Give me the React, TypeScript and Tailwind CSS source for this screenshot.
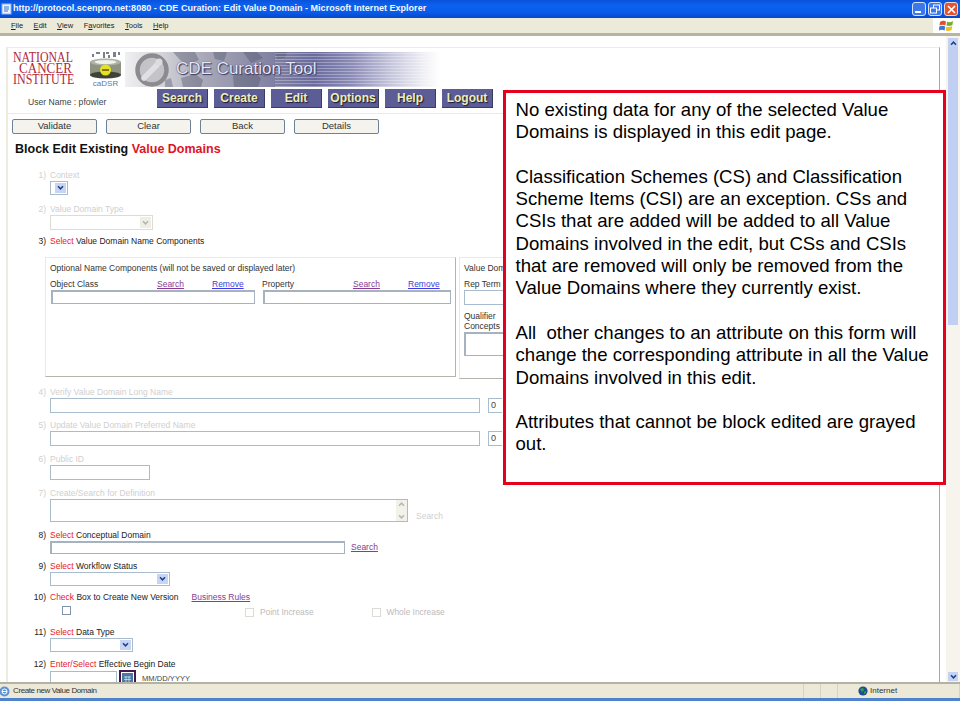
import React from "react";

const sans = "font-['Liberation_Sans',Arial,sans-serif]";

function Chevron({ color = "#1f3f8f" }: { color?: string }) {
  return (
    <svg width="7" height="6" viewBox="0 0 7 6" fill="none">
      <path d="M1 1.2 L3.5 3.8 L6 1.2" stroke={color} strokeWidth="1.5" />
    </svg>
  );
}

function Box({ className = "" }: { className?: string }) {
  return <div className={`border border-[#a9bccd] bg-white ${className}`} />;
}

function Select({ className = "", disabled = false }: { className?: string; disabled?: boolean }) {
  return (
    <div className={`flex justify-end border p-px ${disabled ? "border-[#dcdcd2] bg-white" : "border-[#a9bccd] bg-white"} ${className}`}>
      <div className={`flex w-[11px] items-center justify-center ${disabled ? "bg-[#eeeee6]" : "bg-[#c5d5f2]"}`}>
        <Chevron color={disabled ? "#b4b4ac" : "#1f3f8f"} />
      </div>
    </div>
  );
}

function Label({ n, children, className = "", dim = false }: { n: string; children: React.ReactNode; className?: string; dim?: boolean }) {
  return (
    <div className={`flex h-[11px] items-center text-[8.5px] leading-[11px] ${dim ? "text-[#cfcfcf]" : "text-[#222]"} ${className}`}>
      <span className="w-[38px] text-right">{n}</span>
      <span className="ml-[4px] whitespace-nowrap">{children}</span>
    </div>
  );
}

const Req = ({ children }: { children: React.ReactNode }) => <span className="text-[#e8202c]">{children}</span>;

function NavBtn({ label }: { label: string }) {
  return (
    <div className="flex h-[19px] w-[51px] items-center justify-center border-r border-b border-[#3c3c5c] bg-[#5c5c96] text-[12px] font-bold text-[#eeeeb4] [text-shadow:1px_1px_1px_#1a1a30]">
      {label}
    </div>
  );
}

function ActBtn({ label }: { label: string }) {
  return (
    <div className="flex h-[15px] w-[85px] items-center justify-center rounded-[2px] border border-[#6d8197] bg-[#f4f3ee] text-[9.5px] text-[#333]">
      {label}
    </div>
  );
}

function NciLogo() {
  return (
    <div className="w-[62px] font-['Liberation_Serif',serif] text-[15px] leading-[11px] text-[#b3283c]">
      <div className="origin-left scale-x-[0.79] whitespace-nowrap">NATIONAL</div>
      <div className="ml-[6px] origin-left scale-x-[0.87] whitespace-nowrap">CANCER</div>
      <div className="origin-left scale-x-[0.8] whitespace-nowrap">INSTITUTE</div>
    </div>
  );
}

function CadsrLogo() {
  return (
    <div className="flex w-[33px] flex-col items-center">
      <svg width="33" height="27" viewBox="0 0 33 27">
        <g fill="#7c8088">
          <rect x="3" y="2" width="2" height="3" />
          <rect x="7" y="0" width="4" height="2" />
          <rect x="14" y="0" width="2" height="6" />
          <rect x="17" y="0" width="3" height="2" />
          <rect x="19" y="3" width="2" height="3" />
          <rect x="24" y="0" width="3" height="5" />
          <rect x="29" y="0" width="2" height="3" />
        </g>
        <rect x="1" y="10" width="31" height="13" fill="#8f9482" />
        <ellipse cx="16.5" cy="10" rx="15.5" ry="3.5" fill="#aeb2a6" />
        <ellipse cx="16.5" cy="10" rx="11" ry="2" fill="#eef0ea" />
        <ellipse cx="16.5" cy="23" rx="15.5" ry="3.5" fill="#3e4238" />
        <circle cx="16.5" cy="18" r="5.5" fill="#e6e21e" />
        <path d="M13 18h7" stroke="#5a5a10" strokeWidth="1.5" />
      </svg>
      <div className="mt-[1px] text-[8px] leading-[8px] text-[#66769a]">caDSR</div>
    </div>
  );
}

function Banner() {
  return (
    <div className="relative h-[35px] w-[315px] overflow-hidden bg-[linear-gradient(90deg,#f0f0f2_0%,#d2d2d8_12%,#a8a8b8_25%,#8484a4_45%,#6a6a9e_60%,#8c8cb8_72%,#c8c8de_85%,#f0f0f6_95%,#ffffff_100%)]">
      <svg className="absolute inset-0" width="315" height="35" viewBox="0 0 315 35">
        <g fill="#50546c" opacity="0.4">
          <path d="M48 0h22l4 8-10 4-8-3zM56 26l14-4 8 6-2 7H58zM88 0h14l-3 9-9-2zM118 0h14l6 6-12 5zM108 24l18-5 10 7-3 9h-24zM150 0h12l-2 6-8 1zM74 14l8 2-2 6-7-2zM40 28l6-2 2 9h-8zM136 18l8-3 3 7-8 3z" />
        </g>
        <g stroke="#ffffff" strokeWidth="1" opacity="0.3">
          {Array.from({ length: 12 }).map((_, i) => (
            <line key={i} x1="150" x2="315" y1={1.5 + i * 3} y2={1.5 + i * 3} />
          ))}
        </g>
        <circle cx="27" cy="18" r="14.5" fill="#c4c4c8" stroke="#8c8c90" strokeWidth="4.5" />
        <path d="M19 26 L32 13" stroke="#e0e0e2" strokeWidth="5.5" strokeLinecap="round" />
        <circle cx="34" cy="10" r="3.5" fill="#dcdce0" />
      </svg>
      <div className="absolute top-[6px] left-[51px] text-[17px] leading-[21px] whitespace-nowrap text-[#e6e6f6] [text-shadow:0_0_1px_#2a2a50,1px_1px_1px_#3a3a60]">
        CDE Curation Tool
      </div>
    </div>
  );
}

function TitleBar() {
  return (
    <div className="flex h-[18px] items-center bg-[linear-gradient(180deg,#0a52d8_0%,#0a62f2_30%,#0a5ae8_70%,#0648cc_100%)] pr-[2px]">
      <svg className="ml-[1px]" width="11" height="12" viewBox="0 0 11 12">
        <rect x="1" y="1" width="9" height="10" fill="#eaf2ff" stroke="#8fb4e8" />
        <path d="M3 4h5M3 6h5M3 8h4" stroke="#3a70c0" />
      </svg>
      <div className="ml-[1px] text-[9.05px] font-bold whitespace-nowrap text-[#f2f6ff]">
        http://protocol.scenpro.net:8080 - CDE Curation: Edit Value Domain - Microsoft Internet Explorer
      </div>
      <div className="ml-auto flex items-center gap-[2px]">
        <div className="flex h-[14px] w-[14px] items-end rounded-[3px] border border-[#d8e4fa] bg-[#3c78ea] p-[2px]">
          <div className="h-[2px] w-[6px] bg-white" />
        </div>
        <div className="flex h-[14px] w-[14px] items-center justify-center rounded-[3px] border border-[#d8e4fa] bg-[#3c78ea]">
          <svg width="10" height="10" viewBox="0 0 10 10" fill="none" stroke="#fff">
            <rect x="3.5" y="1" width="6" height="5" />
            <rect x="0.5" y="4" width="6" height="5" fill="#3c78ea" />
          </svg>
        </div>
        <div className="flex h-[14px] w-[14px] items-center justify-center rounded-[3px] border border-[#f2d8d0] bg-[#e2552e]">
          <svg width="9" height="9" viewBox="0 0 9 9" stroke="#fff" strokeWidth="1.7">
            <path d="M1 1 L8 8 M8 1 L1 8" />
          </svg>
        </div>
      </div>
    </div>
  );
}

function MenuBar() {
  return (
    <div className="flex h-[18px] border-b-[3px] border-[#b8b4a2] bg-[#ecead9]">
      <div className="flex flex-1 items-center gap-[10.5px] pl-[11px] text-[7.5px] text-[#222]">
        <span><u>F</u>ile</span>
        <span><u>E</u>dit</span>
        <span><u>V</u>iew</span>
        <span>F<u>a</u>vorites</span>
        <span><u>T</u>ools</span>
        <span><u>H</u>elp</span>
      </div>
      <div className="flex w-[27px] items-center justify-center bg-white">
        <svg width="15" height="14" viewBox="0 0 15 14">
          <path d="M1 3 Q4 1 7 2.5 L6.3 6.5 Q3.5 5 .5 6.5Z" fill="#e0502c" />
          <path d="M8 2.8 Q11 4 14 2 L13.4 6 Q10.5 7.5 7.4 6.6Z" fill="#70b030" />
          <path d="M.3 7.5 Q3.3 6 6.2 7.5 L5.6 11.5 Q2.6 10 0 11.5Z" fill="#3a78d8" />
          <path d="M7.2 7.7 Q10.2 8.6 13.3 7 L12.7 11 Q9.6 12.6 6.6 11.6Z" fill="#f0c020" />
        </svg>
      </div>
    </div>
  );
}

function NameBox() {
  return (
    <div className="h-[120px] w-[411px] border-t border-r border-b border-l border-t-[#ece9e0] border-r-[#b4b4ac] border-b-[#b4b4ac] border-l-[#ece9e0] px-[4px] pt-[5px] text-[8.5px] leading-[11px] text-[#333]">
      <div>Optional Name Components (will not be saved or displayed later)</div>
      <div className="mt-[5px] grid grid-cols-[205px_189px] gap-x-[7px]">
        <div>
          <div className="grid h-[11px] grid-cols-[107px_55px_1fr]">
            <span>Object Class</span>
            <span className="text-[#8a3a94] underline">Search</span>
            <span className="text-[#3a3ae0] underline">Remove</span>
          </div>
          <div className="ml-px h-[14px] border border-t-2 border-l-2 border-[#a6b2bf] bg-white" />
        </div>
        <div>
          <div className="grid h-[11px] grid-cols-[91px_55px_1fr]">
            <span>Property</span>
            <span className="text-[#8a3a94] underline">Search</span>
            <span className="text-[#3a3ae0] underline">Remove</span>
          </div>
          <div className="ml-px h-[14px] border border-t-2 border-l-2 border-[#a6b2bf] bg-white" />
        </div>
      </div>
    </div>
  );
}

function RepBox() {
  return (
    <div className="ml-[3px] h-[122px] w-[47px] overflow-hidden border-t border-b border-l border-t-[#ece9e0] border-b-[#b4b4ac] border-l-[#ece9e0] pt-[5px] pl-[4px] text-[8.5px] leading-[10px] whitespace-nowrap text-[#333]">
      <div>Value Dom</div>
      <div className="mt-[6px]">Rep Term</div>
      <div className="mt-[1px] h-[15px] w-[60px] border border-[#a9bccd]" />
      <div className="mt-[6px]">Qualifier</div>
      <div>Concepts</div>
      <div className="mt-[1px] h-[24px] w-[60px] border border-t-2 border-l-2 border-[#a6b2bf]" />
    </div>
  );
}

function Form() {
  return (
    <div className="mt-[14px]">
      <Label n="1)" dim>Context</Label>
      <div className="ml-[42px] flex">
        <Select className="h-[14px] w-[18px]" />
      </div>

      <Label n="2)" dim className="mt-[9px]">Value Domain Type</Label>
      <div className="ml-[42px]">
        <Select disabled className="h-[15px] w-[103px]" />
      </div>

      <Label n="3)" className="mt-[6px]"><Req>Select</Req> Value Domain Name Components</Label>
      <div className="mt-[10px] ml-[37px] flex">
        <NameBox />
        <RepBox />
      </div>

      <Label n="4)" dim className="mt-[8px]">Verify Value Domain Long Name</Label>
      <div className="ml-[42px] flex items-center">
        <Box className="h-[15px] w-[430px]" />
        <div className="ml-[8px] flex h-[15px] w-[14px] items-center border-y border-l border-[#a9bccd] pl-[2px] text-[9px] text-[#444]">0</div>
      </div>

      <Label n="5)" dim className="mt-[7px]">Update Value Domain Preferred Name</Label>
      <div className="ml-[42px] flex items-center">
        <Box className="h-[15px] w-[430px]" />
        <div className="ml-[8px] flex h-[15px] w-[14px] items-center border-y border-l border-[#a9bccd] pl-[2px] text-[9px] text-[#444]">0</div>
      </div>

      <Label n="6)" dim className="mt-[8px]">Public ID</Label>
      <div className="ml-[42px]">
        <Box className="h-[15px] w-[100px]" />
      </div>

      <Label n="7)" dim className="mt-[8px]">Create/Search for Definition</Label>
      <div className="ml-[42px] flex items-end">
        <div className="flex h-[23px] w-[358px] justify-end border border-[#a9bccd]">
          <div className="flex w-[11px] flex-col items-center justify-between bg-[#f2f1ea] py-[1px]">
            <div className="rotate-180"><Chevron color="#b8b8b0" /></div>
            <Chevron color="#b8b8b0" />
          </div>
        </div>
        <span className="ml-[8px] text-[8.5px] leading-[11px] text-[#cfcfcf]">Search</span>
      </div>

      <Label n="8)" className="mt-[8px]"><Req>Select</Req> Conceptual Domain</Label>
      <div className="ml-[42px] flex items-center">
        <div className="h-[13px] w-[295px] border border-t-2 border-l-2 border-[#a6b2bf]" />
        <span className="ml-[6px] text-[8.5px] text-[#8a3a94] underline">Search</span>
      </div>

      <Label n="9)" className="mt-[7px]"><Req>Select</Req> Workflow Status</Label>
      <div className="ml-[42px]">
        <Select className="h-[14px] w-[120px]" />
      </div>

      <Label n="10)" className="mt-[6px]">
        <Req>Check</Req> Box to Create New Version
        <span className="ml-[13px] text-[#8a3a94] underline">Business Rules</span>
      </Label>
      <div className="flex h-[15px] items-start text-[8.4px] leading-[11px] text-[#bbb]">
        <div className="mt-[3px] ml-[54px] h-[9px] w-[9px] border border-[#7f95ab]" />
        <div className="mt-[5px] ml-[174px] h-[9px] w-[9px] border border-[#dcdcd6]" />
        <span className="mt-[4px] ml-[6px]">Point Increase</span>
        <div className="mt-[5px] ml-[58px] h-[9px] w-[9px] border border-[#dcdcd6]" />
        <span className="mt-[4px] ml-[6px]">Whole Increase</span>
      </div>

      <Label n="11)" className="mt-[9px]"><Req>Select</Req> Data Type</Label>
      <div className="ml-[42px]">
        <Select className="h-[14px] w-[83px]" />
      </div>

      <Label n="12)" className="mt-[7px]"><Req>Enter/Select</Req> Effective Begin Date</Label>
      <div className="ml-[42px] flex items-center">
        <Box className="h-[15px] w-[67px]" />
        <div className="ml-[2px] flex h-[17px] w-[17px] items-center justify-center border-2 border-[#44184c] bg-white">
          <svg width="11" height="11" viewBox="0 0 11 11">
            <rect width="11" height="11" fill="#4a78a4" />
            <path d="M2 4h7M2 6.5h7M4 3v6M7 3v6" stroke="#dfe8f2" strokeWidth="0.7" />
          </svg>
        </div>
        <span className="ml-[6px] text-[7.6px] text-[#444]">MM/DD/YYYY</span>
      </div>
    </div>
  );
}

function Page() {
  return (
    <div className="h-full overflow-hidden border-t border-r border-l-2 border-t-[#f1ecdf] border-r-[#a8a8a0] border-l-[#eeebdf] bg-white">
      <div className="mt-[4px] flex h-[35px] pl-[5px]">
        <NciLogo />
        <div className="ml-[14px]"><CadsrLogo /></div>
        <div className="ml-[3px]"><Banner /></div>
      </div>
      <div className="mt-[2px] flex h-[19px] items-end pl-[20px]">
        <div className="w-[129px] text-[8.6px] leading-[11px] text-[#444]">User Name : pfowler</div>
        <div className="flex gap-[6px]">
          {["Search", "Create", "Edit", "Options", "Help", "Logout"].map((l) => (
            <NavBtn key={l} label={l} />
          ))}
        </div>
      </div>
      <div className="mt-[5px] h-px bg-[#efeadf]" />
      <div className="mt-[5px] flex gap-[9px] pl-[4px]">
        {["Validate", "Clear", "Back", "Details"].map((l) => (
          <ActBtn key={l} label={l} />
        ))}
      </div>
      <div className="mt-[8px] pl-[7px] text-[12.5px] leading-[14px] font-bold text-[#111]">
        Block Edit Existing <span className="text-[#e0141e]">Value Domains</span>
      </div>
      <Form />
    </div>
  );
}

function Scrollbar() {
  return (
    <div className="flex w-[14px] flex-col bg-[#f6f4ec] pt-[2px] pr-[2px] pl-[2px]">
      <div className="flex h-[9px] items-center justify-center bg-[#c4d3f4]">
        <div className="rotate-180"><Chevron /></div>
      </div>
      <div className="h-[278px] bg-[#c0cff2]" />
      <div className="flex-1" />
      <div className="mb-[1px] flex h-[9px] items-center justify-center bg-[#c4d3f4]">
        <Chevron />
      </div>
    </div>
  );
}

function StatusBar() {
  return (
    <div className="flex h-[16px] items-center border-t-2 border-[#b4b2a2] bg-[#ece9d9] text-[8px] text-[#333]">
      <svg width="11" height="11" viewBox="0 0 11 11">
        <circle cx="4.5" cy="5.5" r="5" fill="#5a94d8" />
        <circle cx="4.5" cy="5.5" r="2.5" fill="none" stroke="#fff" />
        <path d="M2 5.5h5" stroke="#fff" />
      </svg>
      <span className="ml-[2px] tracking-[-0.4px]">Create new Value Domain</span>
      <div className="ml-auto flex h-full items-center">
        <div className="h-full w-[17px] border-l border-[#d6d3c2]" />
        <div className="h-full w-[17px] border-l border-[#d6d3c2]" />
        <div className="flex h-full w-[123px] items-center border-x border-[#d6d3c2] pl-[20px]">
          <svg width="10" height="10" viewBox="0 0 10 10">
            <circle cx="5" cy="5" r="4.6" fill="#1d4f8c" />
            <path d="M2 3l3-1 1 2-2 2zM6 6l2-1 0 2-2 1z" fill="#3f9f4a" />
          </svg>
          <span className="ml-[2px]">Internet</span>
        </div>
      </div>
    </div>
  );
}

function Callout() {
  return (
    <div className="absolute top-[90px] left-[503px] z-10 h-[395px] w-[443px] border-[3px] border-[#e6001e] bg-white pt-[6px] pl-[9.5px] text-[18.6px] leading-[22.3px] whitespace-nowrap text-black">
      <div>No existing data for any of the selected Value</div>
      <div>Domains is displayed in this edit page.</div>
      <div className="mt-[22.3px]">Classification Schemes (CS) and Classification</div>
      <div>Scheme Items (CSI) are an exception. CSs and</div>
      <div>CSIs that are added will be added to all Value</div>
      <div>Domains involved in the edit, but CSs and CSIs</div>
      <div>that are removed will only be removed from the</div>
      <div>Value Domains where they currently exist.</div>
      <div className="mt-[22.3px]">All&nbsp; other changes to an attribute on this form will</div>
      <div>change the corresponding attribute in all the Value</div>
      <div>Domains involved in this edit.</div>
      <div className="mt-[22.3px]">Attributes that cannot be block edited are grayed</div>
      <div>out.</div>
    </div>
  );
}

export default function App() {
  return (
    <div className={`relative flex h-[720px] w-[960px] flex-col overflow-hidden bg-white ${sans}`}>
      <TitleBar />
      <MenuBar />
      <div className="flex h-[646px] min-h-0">
        <div className="min-w-0 flex-1 px-[6px] pt-[11px]">
          <Page />
        </div>
        <Scrollbar />
      </div>
      <StatusBar />
      <div className="h-[3px] bg-[#4f82cc]" />
      <Callout />
    </div>
  );
}
